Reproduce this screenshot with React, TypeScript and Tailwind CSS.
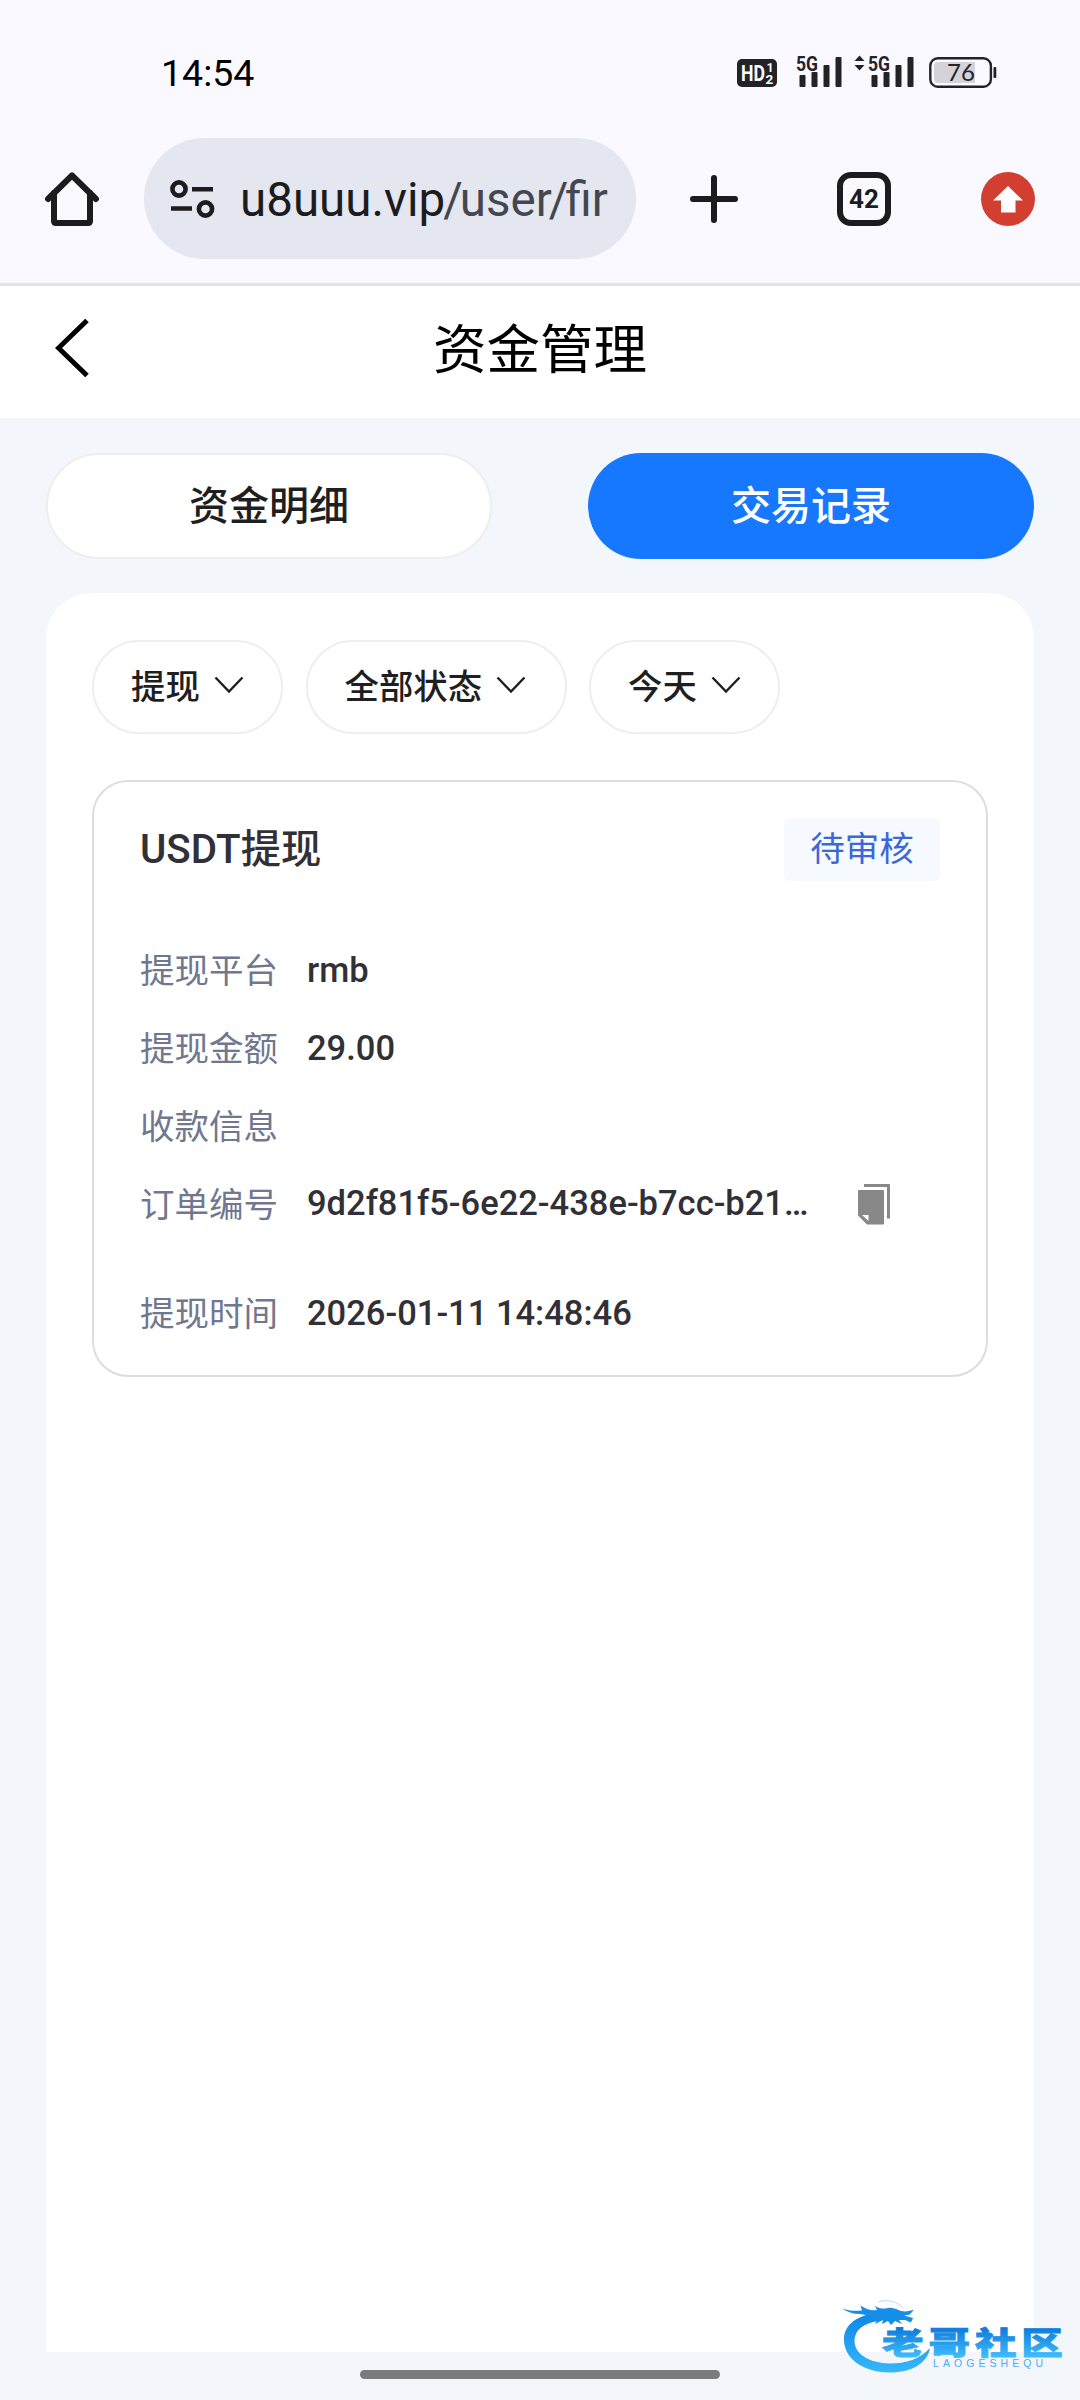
import type { ReactNode } from "react";

const rows = [
  { label: "提现平台", value: "rmb", height: "h-[78px]" },
  { label: "提现金额", value: "29.00", height: "h-[78px]" },
  { label: "收款信息", value: "", height: "h-[78px]" },
  { label: "订单编号", value: "9d2f81f5-6e22-438e-b7cc-b21…", height: "h-[77px]", copy: true },
  { label: "提现时间", value: "2026-01-11 14:48:46", height: "h-[78px] mt-8" },
];

function Signal() {
  return (
    <svg width="46" height="34" viewBox="0 -2 46 34" fill="#232327" className="-mt-0.5 overflow-visible">
      <text x="0" y="15.5" fontSize="21" fontWeight="700" textLength="22" lengthAdjust="spacingAndGlyphs">5G</text>
      <rect x="3.5" y="20" width="6" height="12" rx="1" />
      <rect x="15.5" y="17" width="6" height="15" rx="1" />
      <rect x="27.5" y="10" width="6" height="22" rx="1" />
      <rect x="39.5" y="2" width="6" height="30" rx="1" />
    </svg>
  );
}

function StatusBar() {
  return (
    <div className="flex h-[138px] items-start justify-between pl-[161px] pr-[83px] pt-[55px]">
      <span className="text-[37.5px] leading-9 text-black">14:54</span>
      <div className="flex items-start">
        <svg width="40" height="28" viewBox="0 0 40 28" className="mr-[19px] mt-1">
          <rect width="40" height="28" rx="5" fill="#232327" />
          <g fill="#faf9ff" fontWeight="700">
            <text x="4" y="22" fontSize="22" textLength="24" lengthAdjust="spacingAndGlyphs">HD</text>
            <text x="29.5" y="13" fontSize="12.5">1</text>
            <text x="28.5" y="25" fontSize="13.5">2</text>
          </g>
        </svg>
        <Signal />
        <svg width="11" height="16" viewBox="0 0 11 16" fill="#232327" className="ml-3 mr-[3px]">
          <path d="M0.5 6 5.5 0.5 10.5 6ZM0.5 10H10.5L5.5 15.5Z" />
        </svg>
        <Signal />
        <svg width="68" height="31" viewBox="0 0 68 31" className="ml-[15px] mt-0.5">
          <rect x="1.3" y="1.3" width="60.6" height="28.4" rx="7.5" fill="none" stroke="#232327" strokeWidth="2.4" />
          <path d="M9 5H46V26H9Q5 26 5 22V9Q5 5 9 5Z" fill="#d4d3d9" />
          <rect x="64.5" y="10" width="2.8" height="11" rx="1" fill="#232327" />
          <text x="18" y="24" fontSize="24" fill="#232327" className="font-['Lato']">76</text>
        </svg>
      </div>
    </div>
  );
}

function BrowserBar() {
  return (
    <div className="flex h-[145px] items-start">
      <svg width="54" height="54" viewBox="0 0 54 54" className="ml-[45px] mt-[34px]" fill="none" stroke="#1b1b20" strokeWidth="6" strokeLinecap="round" strokeLinejoin="round">
        <path d="M3 27 27 3.5 51 27" />
        <path d="M9 21V49Q9 51 11 51H43Q45 51 45 49V21" />
      </svg>
      <div className="ml-[45px] flex h-[121px] w-[492px] items-center rounded-full bg-[#e4e7f0] pl-[26px]">
        <svg width="45" height="38" viewBox="0 0 45 38" className="shrink-0" fill="none" stroke="#1b1b20" strokeWidth="4.6">
          <circle cx="9" cy="9" r="6.6" />
          <path d="M22 9.3H43M1 28.5H22" />
          <circle cx="35.5" cy="29" r="6.6" />
        </svg>
        <span className="ml-[25px] mt-0.5 whitespace-nowrap text-[47.5px] leading-[60px] text-[#1b1b20]">
          u8uuu.vip
          <span className="text-[#44474f]">
            <span className="-ml-0.5 -mr-[3px]">/</span>user<span className="-ml-[3px] -mr-[3px]">/</span>fir
          </span>
        </span>
      </div>
      <svg width="48" height="48" viewBox="0 0 48 48" className="ml-[54px] mt-[37px]" stroke="#1b1b20" strokeWidth="6" strokeLinecap="round">
        <path d="M24 3V45M3 24H45" />
      </svg>
      <div className="ml-[99px] mt-[34px] flex h-[54px] w-[54px] items-center justify-center rounded-[14px] border-[6px] border-[#1b1b20] text-[26px] font-bold leading-none text-[#1b1b20]">
        42
      </div>
      <svg width="54" height="54" viewBox="0 0 54 54" className="ml-[90px] mt-[34px]">
        <circle cx="27" cy="27" r="27" fill="#d23f31" />
        <path d="M27 14 42 28.5H34.5V40.5H20V28.5H12Z" fill="#fff" />
      </svg>
    </div>
  );
}

function Filter({ width, children }: { width: string; children: ReactNode }) {
  return (
    <div className={`flex h-[94px] items-center rounded-full border-2 border-[#eeeeee] pl-[37px] text-[34.4px] font-medium text-[#1f1f1f] ${width}`}>
      <span className="leading-none">{children}</span>
      <svg width="30" height="18" viewBox="0 0 30 18" className="-mt-1 ml-3.5" fill="none" stroke="#1f1f1f" strokeWidth="2.4">
        <path d="M1.5 1.5 15 15.5 28.5 1.5" />
      </svg>
    </div>
  );
}

function CopyIcon() {
  return (
    <svg width="32" height="41" viewBox="0 0 32 41" fill="#888" className="mt-0.5">
      <path d="M6 0H31Q32 0 32 1V34.5H29V3H6Z" />
      <path fillRule="evenodd" d="M1 6H25Q26 6 26 7V39.5Q26 40.5 25 40.5H9L0 31.5V7Q0 6 1 6ZM4 31 10.5 37V31Z" />
    </svg>
  );
}

function Watermark() {
  return (
    <svg width="240" height="90" viewBox="0 0 240 90" className="absolute bottom-4 right-0">
      <defs>
        <linearGradient id="wave" x1="0" y1="0" x2="0" y2="1">
          <stop offset="0" stopColor="#0f86e4" />
          <stop offset="1" stopColor="#35b8fb" />
        </linearGradient>
        <linearGradient id="ink" gradientUnits="userSpaceOnUse" x1="0" y1="-26" x2="0" y2="3">
          <stop offset="0" stopColor="#0c7bdc" />
          <stop offset="1" stopColor="#3fbdfb" />
        </linearGradient>
      </defs>
      <path d="M36 19C14 22 3 33 4 47C5 66 25 78.500 50 78.500C71 78.500 87 70 90 54C80 65 66 69.500 50 69.500C29 69 14 60 14.500 46C15 36 24 29 38 27Z" fill="url(#wave)" />
      <path d="M2 14.500C9 17 15 17 22 16.500L20.500 11.500C26 15 31 17 37 16L35 12C40 15 44 15 48 14C54 13 57 16 61 17C66 18 70 17 74 15.500L70 20.500L64 21.500L73 24L71 28.500L65 26L59 26L62 30L55 27L51 31L48 27L42 30L43 26L35 30L37 26L29 28L32 22L20 20C13 20 7 18 2 14.500Z" fill="#158ee8" />
      <path d="M38 8C47 5 57 7 63 14" fill="none" stroke="#c4e2f8" strokeWidth="1.2" />
      <g transform="translate(42 60) scale(1.34 1)" fill="url(#ink)" stroke="url(#ink)" strokeWidth="0.8">
        <text fontSize="31" fontWeight="900" textLength="135" className="font-['Noto_Sans_CJK_SC']">老哥社区</text>
      </g>
      <text x="93" y="73" fontSize="10.5" fill="#4aaef0" textLength="110" className="font-['Liberation_Sans']">LAOGESHEQU</text>
    </svg>
  );
}

export default function App() {
  return (
    <div className="relative flex h-[2400px] w-[1080px] flex-col overflow-hidden bg-[#f3f6fb] font-['Roboto','Noto_Sans_CJK_SC',sans-serif]">
      <header className="h-[286px] border-b-[3px] border-[#e2e2e9] bg-[#faf9ff]">
        <StatusBar />
        <BrowserBar />
      </header>

      <nav className="grid h-[132px] grid-cols-[1fr_auto_1fr] items-center bg-white pb-2 text-black">
        <svg width="34" height="58" viewBox="0 0 34 58" className="ml-[55px]" fill="none" stroke="#000" strokeWidth="5">
          <path d="M32 1.5 3.5 29 32 56.5" />
        </svg>
        <h1 className="pt-1.5 text-[53.5px] leading-none">资金管理</h1>
      </nav>

      <div className="flex justify-between px-[46px] pt-[35px] text-[40px] font-medium leading-none">
        <button className="h-[106px] w-[446px] rounded-full border-2 border-[#eeeeee] bg-white pt-0.5 text-[#1f1f1f]">资金明细</button>
        <button className="h-[106px] w-[446px] rounded-full bg-[#1677ff] pt-0.5 text-white">交易记录</button>
      </div>

      <main className="mx-[46px] mt-[34px] h-[1759px] rounded-t-[45px] bg-white px-[46px] pt-[47px]">
        <div className="flex gap-[22.5px]">
          <Filter width="w-[191px]">提现</Filter>
          <Filter width="w-[261px]">全部状态</Filter>
          <Filter width="w-[191px]">今天</Filter>
        </div>

        <section className="mt-[46px] h-[597px] rounded-[36px] border-2 border-[#dddddd] px-[46px] pt-9">
          <div className="flex h-[63px] items-center justify-between">
            <h2 className="pt-0.5 text-[40.3px] font-medium leading-none text-[#303036]">USDT提现</h2>
            <span className="flex h-[63px] w-[156px] items-center justify-center rounded-md bg-[#f6faff] text-[34.5px] leading-none text-[#3c67d8]">待审核</span>
          </div>
          <div className="mt-[50px] text-[34.5px] leading-none">
            {rows.map((row) => (
              <div key={row.label} className={`flex items-center ${row.height}`}>
                <span className="w-[167px] pt-[3px] text-[#70778f]">{row.label}</span>
                <span className="w-[551px] font-medium text-[#303036]">{row.value}</span>
                {row.copy && <CopyIcon />}
              </div>
            ))}
          </div>
        </section>
      </main>

      <div className="mx-auto mt-[18px] h-[9px] w-[360px] rounded-full bg-[#7a7b7f]" />
      <Watermark />
    </div>
  );
}
